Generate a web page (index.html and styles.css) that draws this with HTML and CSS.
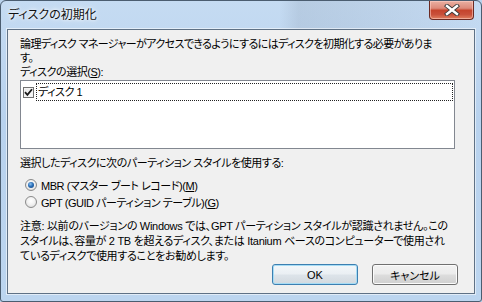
FILE: index.html
```
<!DOCTYPE html>
<html lang="ja">
<head>
<meta charset="utf-8">
<title>ディスクの初期化</title>
<link rel="stylesheet" href="styles.css">
</head>
<body>
<div class="window">
  <div class="titlebar">
    <span class="title">ディスクの初期化</span>
    <div class="close" aria-label="閉じる">
      <svg width="16" height="12" viewBox="0 0 16 12">
        <path d="M3 2 L13 10 M13 2 L3 10" stroke="#3a3a3a" stroke-width="4.2" stroke-linecap="square"/>
        <path d="M3 2 L13 10 M13 2 L3 10" stroke="#ffffff" stroke-width="2.4" stroke-linecap="square"/>
      </svg>
    </div>
  </div>
  <div class="client">
    <p class="intro">論理ディスク マネージャーがアクセスできるようにするにはディスクを初期化する必要がありま<br>す。</p>
    <div class="label">ディスクの選択(<u>S</u>):</div>
    <div class="listbox">
      <div class="item">
        <span class="check">
          <svg width="9" height="9" viewBox="0 0 9 9"><path d="M1 4.2 L3.4 6.8 L8 1.2" fill="none" stroke="#1a1a1a" stroke-width="1.8"/></svg>
        </span>
        <span class="item-text">ディスク 1</span>
      </div>
    </div>
    <div class="label group">選択したディスクに次のパーティション スタイルを使用する:</div>
    <div class="radio"><span class="radio-mark checked"></span><span>MBR (マスター ブート レコード)(<u>M</u>)</span></div>
    <div class="radio"><span class="radio-mark"></span><span>GPT (GUID パーティション テーブル)(<u>G</u>)</span></div>
    <p class="note">注意: 以前のバージョンの Windows では、GPT パーティション スタイルが認識されません。この<br>スタイルは、容量が 2 TB を超えるディスク、または Itanium ベースのコンピューターで使用され<br>ているディスクで使用することをお勧めします。</p>
    <div class="buttons">
      <button class="btn default">OK</button>
      <button class="btn">キャンセル</button>
    </div>
  </div>
</div>
</body>
</html>
```
FILE: styles.css
```
* { box-sizing: border-box; }
html, body {
  margin: 0;
  padding: 0;
  width: 482px;
  height: 302px;
  overflow: hidden;
  background: #b9d2ec;
}
body {
  font-family: "Liberation Sans", "Noto Sans CJK JP", sans-serif;
  font-size: 11px;
  letter-spacing: -0.45px;
  color: #000;
  font-feature-settings: "palt";
}
.window {
  width: 482px;
  height: 302px;
  display: flex;
  flex-direction: column;
  border: 1px solid #4b5d70;
  border-radius: 6px 6px 3px 3px;
  background:
    linear-gradient(90deg, rgba(255,255,255,0) 0%, rgba(255,255,255,0) 58%, rgba(120,135,155,0.18) 62%, rgba(150,165,185,0.12) 85%, rgba(255,255,255,0) 100%) top / 100% 29px no-repeat,
    linear-gradient(180deg, #c5dbf2 0%, #b8d2ee 40%, #bcd5ef 100%);
  padding: 0 6px 7px 6px;
}
.titlebar {
  height: 28px;
  display: flex;
  align-items: flex-start;
  justify-content: space-between;
  flex: none;
}
.title {
  margin: 7px 0 0 1px;
  font-size: 12px;
  line-height: 14px;
  letter-spacing: 0;
  color: #111;
  text-shadow: 0 0 6px #fff, 0 0 3px #fff;
}
.close {
  width: 45px;
  height: 19px;
  margin-right: 1px;
  border: 1px solid #6b2a22;
  border-top: none;
  border-radius: 0 0 4px 4px;
  background: linear-gradient(180deg, #eab0a2 0%, #dd8a7a 40%, #c5442c 52%, #c9503a 75%, #e08060 100%);
  box-shadow: inset 0 0 0 1px rgba(255,210,200,0.55);
  display: flex;
  align-items: center;
  justify-content: center;
}
.client {
  flex: 1;
  background: #f0f0f0;
  border: 1px solid #5f7185;
  box-shadow: 0 0 0 1px rgba(255,255,255,0.55);
  padding: 7px 16px 0 12px;
  display: flex;
  flex-direction: column;
}
.intro {
  margin: 0;
  line-height: 14px;
  letter-spacing: -0.6px;
  white-space: nowrap;
}
.label {
  line-height: 14px;
  white-space: nowrap;
}
.listbox {
  margin: 1px 3px 0 0;
  height: 69px;
  background: #fff;
  border: 1px solid #828790;
  padding: 2px 1px 0 2px;
}
.item {
  display: flex;
  align-items: center;
  height: 18px;
}
.check {
  width: 11px;
  height: 11px;
  border: 1px solid #707070;
  background: linear-gradient(135deg, #e6e6e6, #fcfcfc);
  box-shadow: inset 0 0 0 1px #f4f4f4;
  display: flex;
  align-items: center;
  justify-content: center;
  margin-right: 2px;
  flex: none;
}
.item-text {
  flex: 1;
  height: 18px;
  line-height: 16px;
  border: 1px dotted #222;
  padding-left: 1px;
}
.group {
  margin-top: 7px;
}
.radio {
  display: flex;
  align-items: center;
  height: 17px;
  white-space: nowrap;
}
.group + .radio { margin-top: 6px; }
.radio-mark {
  width: 12px;
  height: 12px;
  border-radius: 50%;
  border: 1px solid #8a8a8a;
  background: radial-gradient(circle at 50% 40%, #ffffff 0%, #f2f2f2 45%, #d4d4d4 100%);
  margin: 0 4px 0 5px;
  display: flex;
  align-items: center;
  justify-content: center;
  flex: none;
}
.radio-mark.checked::after {
  content: "";
  width: 6px;
  height: 6px;
  border-radius: 50%;
  background: radial-gradient(circle at 40% 35%, #8ec2f0 0%, #2a6fb8 45%, #0f3e7a 100%);
}
.note {
  margin: 9px 0 0 0;
  line-height: 15px;
  letter-spacing: -0.3px;
  white-space: nowrap;
}
.buttons {
  display: flex;
  justify-content: flex-end;
  gap: 14px;
  margin-top: 0;
}
.btn {
  width: 86px;
  height: 21px;
  padding: 0;
  font: inherit;
  font-size: 11px;
  letter-spacing: 0;
  color: #000;
  border: 1px solid #707070;
  border-radius: 3px;
  background: linear-gradient(180deg, #f2f2f2 0%, #ebebeb 48%, #dddddd 52%, #cfcfcf 100%);
  box-shadow: inset 0 0 0 1px #fbfbfb;
}
.btn.default {
  border-color: #3c7fb1;
  box-shadow: inset 0 0 0 1px #a6dcf5;
  background: linear-gradient(180deg, #f3f7fa 0%, #eaeff3 48%, #dde4ea 52%, #d2d9df 100%);
}
```
